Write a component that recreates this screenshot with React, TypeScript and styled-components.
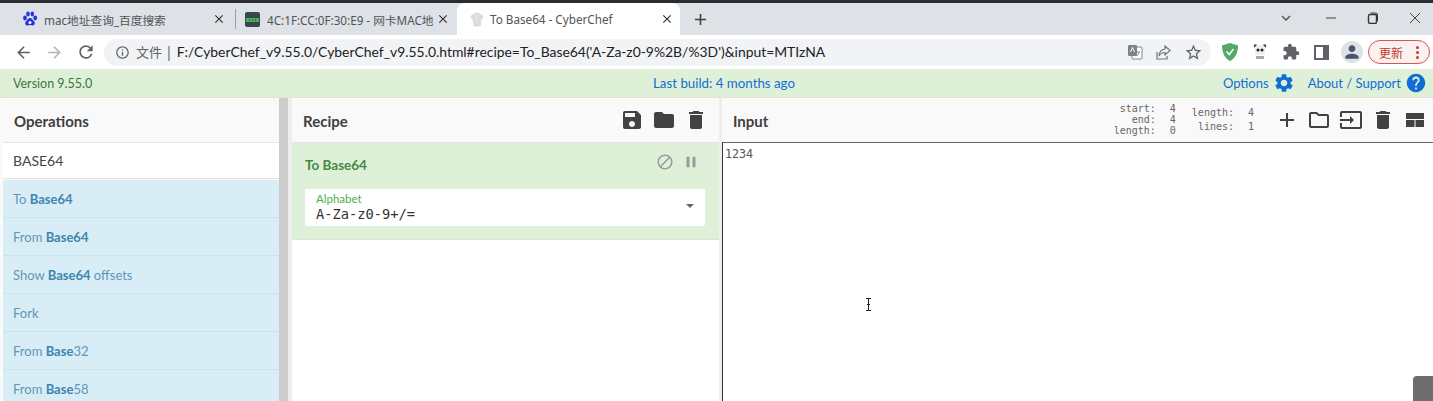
import * as React from "react";
import styled, { createGlobalStyle } from "styled-components";
import {
  MdAdd,
  MdArrowBack,
  MdArrowForward,
  MdBlock,
  MdClose,
  MdDelete,
  MdExtension,
  MdFolder,
  MdHelp,
  MdInput,
  MdInfoOutline,
  MdKeyboardArrowDown,
  MdOutlineFolder,
  MdPause,
  MdPerson,
  MdRefresh,
  MdSave,
  MdSettings,
  MdStarBorder,
} from "react-icons/md";

const GlobalStyle = createGlobalStyle`
  html, body {
    margin: 0;
    padding: 0;
    height: 100%;
    overflow: hidden;
    background: #fff;
  }
  body {
    font-family: Lato, "Noto Sans CJK SC", sans-serif;
  }
`;

const operations: { pre?: string; bold?: string; post?: string }[] = [
  { pre: "To ", bold: "Base64" },
  { pre: "From ", bold: "Base64" },
  { pre: "Show ", bold: "Base64", post: " offsets" },
  { pre: "Fork" },
  { pre: "From ", bold: "Base", post: "32" },
  { pre: "From ", bold: "Base", post: "58" },
];

const App: React.FunctionComponent = () => {
  return (
    <Page>
      <GlobalStyle />
      <TitleEdge />
      <TabStrip>
        <FirstTab>
          <BaiduIcon />
          <TabTitle>mac地址查询_百度搜索</TabTitle>
          <TabClose />
        </FirstTab>
        <TabDivider />
        <SecondTab>
          <ChipIcon />
          <TabTitle>4C:1F:CC:0F:30:E9 - 网卡MAC地</TabTitle>
          <TabClose />
        </SecondTab>
        <ActiveTab>
          <ChefIcon />
          <TabTitle>To Base64 - CyberChef</TabTitle>
          <TabClose />
        </ActiveTab>
        <NewTab />
        <WindowControls>
          <MdKeyboardArrowDown size={18} color="#555" />
          <WindowGlyph>
            <svg width="12" height="12" viewBox="0 0 12 12">
              <path d="M1 6h10" stroke="#444" strokeWidth="1" />
            </svg>
          </WindowGlyph>
          <WindowGlyph>
            <svg width="12" height="12" viewBox="0 0 12 12" fill="none" stroke="#333">
              <rect x="1.5" y="2.5" width="8" height="9" rx="1.5" strokeWidth="1.4" />
              <path d="M3.5 1h5a2 2 0 0 1 2 2v6" />
            </svg>
          </WindowGlyph>
          <WindowGlyph>
            <svg width="12" height="12" viewBox="0 0 12 12">
              <path d="M1 1l10 10M11 1L1 11" stroke="#444" strokeWidth="1" />
            </svg>
          </WindowGlyph>
        </WindowControls>
      </TabStrip>

      <Toolbar>
        <NavButtons>
          <MdArrowBack size={19} color="#5f6368" />
          <MdArrowForward size={19} color="#b4b7bb" />
          <MdRefresh size={20} color="#5f6368" />
        </NavButtons>
        <AddressBar>
          <MdInfoOutline size={15} color="#5f6368" />
          <FileLabel>文件</FileLabel>
          <FileBar>|</FileBar>
          <UrlText>F:/CyberChef_v9.55.0/CyberChef_v9.55.0.html#recipe=To_Base64('A-Za-z0-9%2B/%3D')&amp;input=MTIzNA</UrlText>
          <AddressIcons>
            <TranslateIcon />
            <ShareIcon />
            <MdStarBorder size={19} color="#5f6368" />
          </AddressIcons>
        </AddressBar>
        <ExtensionIcons>
          <ShieldIcon />
          <PandaIcon />
          <MdExtension size={18} color="#5f6368" />
          <SidePanelIcon />
          <Avatar>
            <MdPerson size={20} color="#4a5568" />
          </Avatar>
        </ExtensionIcons>
        <UpdateButton>
          更新
          <UpdateDots>
            <span />
            <span />
            <span />
          </UpdateDots>
        </UpdateButton>
      </Toolbar>

      <Banner>
        <VersionText>Version 9.55.0</VersionText>
        <BuildText>Last build: 4 months ago</BuildText>
        <BannerLinks>
          <BannerLink>
            Options <MdSettings size={22} />
          </BannerLink>
          <BannerLink>
            About / Support <MdHelp size={22} />
          </BannerLink>
        </BannerLinks>
      </Banner>

      <Workspace>
        <OperationsColumn>
          <PanelHeader>Operations</PanelHeader>
          <SearchBox>BASE64</SearchBox>
          <OperationList>
            {operations.map((op, i) => (
              <OperationItem key={i}>
                {op.pre}
                {op.bold && <b>{op.bold}</b>}
                {op.post}
              </OperationItem>
            ))}
          </OperationList>
        </OperationsColumn>
        <WideGutter />
        <RecipeColumn>
          <PanelHeader>
            Recipe
            <HeaderIcons>
              <MdSave size={24} />
              <MdFolder size={24} />
              <MdDelete size={24} />
            </HeaderIcons>
          </PanelHeader>
          <RecipeCard>
            <CardTop>
              To Base64
              <CardIcons>
                <MdBlock size={18} />
                <MdPause size={18} />
              </CardIcons>
            </CardTop>
            <AlphabetField>
              <FieldLabel>Alphabet</FieldLabel>
              <FieldValue>A-Za-z0-9+/=</FieldValue>
              <FieldCaret />
            </AlphabetField>
          </RecipeCard>
        </RecipeColumn>
        <NarrowGutter />
        <InputColumn>
          <InputHeader>
            Input
            <InputMeta>
              <InfoGroup $lineHeight={11} $gap={16}>
                <InfoRow>start:<i>4</i></InfoRow>
                <InfoRow>end:<i>4</i></InfoRow>
                <InfoRow>length:<i>0</i></InfoRow>
              </InfoGroup>
              <InfoGroup $lineHeight={14} $gap={21}>
                <InfoRow>length:<i>4</i></InfoRow>
                <InfoRow>lines:<i>1</i></InfoRow>
              </InfoGroup>
              <InputIcons>
                <MdAdd size={24} />
                <MdOutlineFolder size={24} />
                <MdInput size={24} />
                <MdDelete size={24} />
                <LayoutIcon />
              </InputIcons>
            </InputMeta>
          </InputHeader>
          <InputArea>1234</InputArea>
        </InputColumn>
      </Workspace>

      <TextCursor>
        <svg width="7" height="13" viewBox="0 0 7 13" fill="none" stroke="#222">
          <path d="M1 .5h5M3.5 .5v12M1 12.5h5M2 6.5h3" />
        </svg>
      </TextCursor>
      <CornerTab />
    </Page>
  );
};

export default App;

function BaiduIcon() {
  return (
    <svg width="16" height="16" viewBox="0 0 16 16" fill="#2932e1">
      <ellipse cx="3" cy="7" rx="1.9" ry="2.4" />
      <ellipse cx="6" cy="3" rx="1.8" ry="2.4" />
      <ellipse cx="10.3" cy="3" rx="1.8" ry="2.4" />
      <ellipse cx="13.2" cy="7" rx="1.9" ry="2.4" />
      <path d="M8 7c2 0 2.600 2 4 3.200 1.600 1.500.8 4.300-1.500 4.300-1 0-1.700-.4-2.500-.4s-1.500.4-2.500.4C3.200 14.500 2.400 11.700 4 10.200 5.400 9 6 7 8 7z" />
      <circle cx="8" cy="11.500" r="1.500" fill="#fff" />
    </svg>
  );
}

function ChipIcon() {
  return (
    <svg width="15" height="15" viewBox="0 0 15 15">
      <rect width="15" height="15" rx="2" fill="#37474f" />
      <rect x="1" y="6" width="13" height="4" fill="#4caf50" />
      <path d="M4 8h1M7 8h1M10 8h1" stroke="#1b2a20" />
    </svg>
  );
}

function ChefIcon() {
  return (
    <svg width="16" height="17" viewBox="0 0 16 17">
      <path d="M4 9C1 8 1 3.500 4 3.500 5 1 11 1 12 3.500c3 0 3 4.500 0 5.500v5.500C10 16 6 16 4 14.500z" fill="#dcdcdc" />
      <path d="M7.500 4v6" stroke="#f1f1f1" />
    </svg>
  );
}

function TranslateIcon() {
  return (
    <svg width="16" height="16" viewBox="0 0 16 16">
      <rect x="5" y="3" width="10" height="12" rx="1" fill="#fff" stroke="#80868b" />
      <rect x="1" y="1" width="9" height="11" rx="1" fill="#7d8286" />
      <path d="M3.500 8l2-4.500L7.500 8" fill="none" stroke="#fff" />
      <path d="M10 8h3M12 8c0 2-1 3-2 4" fill="none" stroke="#80868b" />
    </svg>
  );
}

function ShareIcon() {
  return (
    <svg width="17" height="17" viewBox="0 0 17 17" fill="none" stroke="#70757a" strokeWidth="1.200">
      <path d="M2 8v7h10v-3" />
      <path d="M10 2l5 4.500-5 4.500V8.500C7 8.500 5.500 9.500 4 12c.3-4 2.500-6.500 6-7z" />
    </svg>
  );
}

function ShieldIcon() {
  return (
    <svg width="16" height="18" viewBox="0 0 16 18">
      <path d="M8 0l8 2.500C16 10 13 15.500 8 18 3 15.500 0 10 0 2.500z" fill="#52a968" />
      <path d="M4.500 8.500L7.300 11.500 11.500 6" fill="none" stroke="#fff" strokeWidth="1.500" />
    </svg>
  );
}

function PandaIcon() {
  return (
    <svg width="16" height="18" viewBox="0 0 16 18">
      <circle cx="3.500" cy="3" r="1.700" fill="#333" />
      <circle cx="12.500" cy="3" r="1.700" fill="#333" />
      <rect x="3" y="2" width="10" height="10" rx="3" fill="#eee" />
      <circle cx="6" cy="7" r="1.500" fill="#222" />
      <circle cx="10" cy="7" r="1.500" fill="#222" />
      <rect x="4" y="13" width="8" height="3" fill="#aaa" />
    </svg>
  );
}

function SidePanelIcon() {
  return (
    <svg width="15" height="15" viewBox="0 0 15 15">
      <rect x="1" y="1" width="13" height="13" fill="#fff" stroke="#5f6368" strokeWidth="2" />
      <rect x="9" y="1" width="5" height="13" fill="#5f6368" />
    </svg>
  );
}

function LayoutIcon() {
  return (
    <svg width="24" height="24" viewBox="0 0 24 24" fill="currentColor">
      <path d="M3 5h18v6H3zM3 12h8.500v7H3zM12.500 12H21v7h-8.500z" />
    </svg>
  );
}

const Page = styled.div`
  position: relative;
  width: 1433px;
  height: 401px;
  overflow: hidden;
  display: flex;
  flex-direction: column;
  background: #fff;
`;

const TitleEdge = styled.div`
  height: 3px;
  flex: none;
  background: #292c30;
`;

const TabStrip = styled.div`
  height: 32px;
  flex: none;
  display: flex;
  align-items: stretch;
  background: #dee1e6;
  padding-left: 13px;
`;

const Tab = styled.div`
  display: flex;
  align-items: center;
  box-sizing: border-box;
  font: 11.700px "Noto Sans", "Noto Sans CJK SC", sans-serif;
  color: #50555a;

  svg {
    flex: none;
  }
`;

const FirstTab = styled(Tab)`
  width: 222px;
  padding: 0 9px;
  gap: 6px;
`;

const SecondTab = styled(Tab)`
  width: 221px;
  padding: 0 7px 0 9px;
  gap: 7px;
`;

const ActiveTab = styled(Tab)`
  width: 223px;
  background: #fff;
  border-radius: 8px 8px 0 0;
  padding: 0 6px 0 12px;
  gap: 5px;
`;

const TabTitle = styled.span`
  flex: 1;
  min-width: 0;
  white-space: nowrap;
`;

const TabDivider = styled.div`
  width: 1px;
  height: 20px;
  margin: 6px 0 0;
  background: #9aa0a6;
`;

const TabClose = styled(MdClose).attrs({ size: 14 })`
  color: #333;
`;

const NewTab = styled(MdAdd).attrs({ size: 19 })`
  flex: none;
  align-self: center;
  margin-left: 11px;
  color: #3c4043;
`;

const WindowControls = styled.div`
  margin-left: auto;
  display: flex;
  align-items: center;
  gap: 30px;
  padding: 0 12px 2px 0;
`;

const WindowGlyph = styled.span`
  display: flex;
`;

const Toolbar = styled.div`
  height: 34px;
  flex: none;
  display: flex;
  align-items: center;
  background: #fff;
  padding-left: 14px;
  box-sizing: border-box;
`;

const NavButtons = styled.div`
  display: flex;
  align-items: center;
  gap: 12px;
  width: 92px;
`;

const AddressBar = styled.div`
  width: 1107px;
  height: 27px;
  margin-left: -2px;
  padding-left: 11px;
  box-sizing: border-box;
  background: #f1f3f4;
  border-radius: 14px;
  display: flex;
  align-items: center;
`;

const FileLabel = styled.span`
  margin: -1px 0 0 6px;
  font: 13px "Noto Sans CJK SC", sans-serif;
  color: #5f6368;
`;

const FileBar = styled.span`
  margin: -1px 4px 0 3px;
  font: 14px "Noto Sans", sans-serif;
  color: #5f6368;
`;

const UrlText = styled.span`
  margin-top: -1px;
  font: 13.900px Lato, sans-serif;
  color: #202124;
  white-space: nowrap;
`;

const AddressIcons = styled.div`
  margin-left: auto;
  display: flex;
  align-items: center;
  gap: 12px;
  padding-right: 8px;
`;

const ExtensionIcons = styled.div`
  display: flex;
  align-items: center;
  gap: 14px;
  margin-left: 11px;
`;

const Avatar = styled.div`
  width: 22px;
  height: 22px;
  margin-left: -2px;
  border-radius: 50%;
  background: #dee1e6;
  display: flex;
  align-items: center;
  justify-content: center;
`;

const UpdateButton = styled.div`
  width: 62px;
  height: 24px;
  margin-left: 5px;
  box-sizing: border-box;
  border: 1px solid #d9534f;
  border-radius: 12px;
  background: #fbf1f0;
  color: #c5392f;
  font: 12px "Noto Sans CJK SC", sans-serif;
  display: flex;
  align-items: center;
  padding-left: 10px;
`;

const UpdateDots = styled.div`
  margin-left: 13px;
  display: flex;
  flex-direction: column;
  gap: 2px;

  span {
    width: 3px;
    height: 3px;
    border-radius: 50%;
    background: #c5392f;
  }
`;

const Banner = styled.div`
  height: 28px;
  flex: none;
  background: #dff0d8;
  border-bottom: 1px solid #d8e6d3;
  display: grid;
  grid-template-columns: 1fr 1fr 1fr;
  align-items: center;
  padding: 0 6px 0 13px;
  font-size: 13px;
`;

const VersionText = styled.span`
  color: #3c763d;
  font-size: 12.500px;
`;

const BuildText = styled.span`
  color: #0f6ed5;
  text-align: center;
  padding-left: 8px;
  font-size: 13.300px;
`;

const BannerLinks = styled.div`
  display: flex;
  justify-content: flex-end;
  gap: 13px;
`;

const BannerLink = styled.span`
  display: flex;
  align-items: center;
  gap: 4px;
  color: #0f6ed5;
`;

const Workspace = styled.div`
  flex: 1;
  min-height: 0;
  display: flex;
  padding-left: 3px;
  background: #fafafa;
`;

const OperationsColumn = styled.div`
  width: 276px;
  flex: none;
  display: flex;
  flex-direction: column;
`;

const WideGutter = styled.div`
  width: 13px;
  flex: none;
  box-sizing: border-box;
  border-left: 9px solid #cccccc;
  background: #eeeeee;
`;

const NarrowGutter = styled.div`
  width: 3px;
  flex: none;
  background: #eeeeee;
`;

const RecipeColumn = styled.div`
  width: 427px;
  flex: none;
  display: flex;
  flex-direction: column;
  background: #fff;
`;

const InputColumn = styled.div`
  flex: 1;
  min-width: 0;
  display: flex;
  flex-direction: column;
`;

const PanelHeader = styled.div`
  height: 45px;
  flex: none;
  box-sizing: border-box;
  display: flex;
  align-items: center;
  justify-content: space-between;
  padding: 1px 10px 0 11px;
  background: #f9f9f9;
  border-bottom: 1px solid #e4e4e4;
  color: #3f3f3f;
  font-size: 15px;
  font-weight: 700;
`;

const HeaderIcons = styled.div`
  display: flex;
  gap: 8px;
  color: #424242;
  margin: -1px 1px 0 0;
`;

const SearchBox = styled.div`
  height: 36px;
  flex: none;
  box-sizing: border-box;
  padding: 0 10px;
  display: flex;
  align-items: center;
  background: #fff;
  color: #444;
  font-size: 14px;
  border-bottom: 1px solid #e4e4e4;
`;

const OperationList = styled.div`
  margin-top: 1px;
  flex: 1;
  background: #d9edf7;
`;

const OperationItem = styled.div`
  height: 38px;
  box-sizing: border-box;
  padding: 0 10px;
  display: flex;
  align-items: center;
  white-space: pre;
  border-bottom: 1px solid #c6e5ef;
  color: #5e97b6;
  font-size: 13px;

  b {
    color: #3d85ad;
  }
`;

const RecipeCard = styled.div`
  height: 97px;
  flex: none;
  box-sizing: border-box;
  padding: 0 14px 0 13px;
  background: #dff0d8;
  border-bottom: 1px solid #d8e6d3;
`;

const CardTop = styled.div`
  height: 46px;
  box-sizing: border-box;
  display: flex;
  align-items: center;
  justify-content: space-between;
  padding: 0 5px 2px 0;
  color: #468847;
  font-size: 13.500px;
  font-weight: 700;
`;

const CardIcons = styled.div`
  display: flex;
  gap: 8px;
  color: #9a9a9a;
  margin-top: -6px;
`;

const AlphabetField = styled.div`
  position: relative;
  height: 37px;
  box-sizing: border-box;
  background: #fff;
  border-radius: 2px;
  padding: 3px 11px;
`;

const FieldLabel = styled.div`
  font-size: 11.500px;
  line-height: 13px;
  color: #4caf50;
`;

const FieldValue = styled.div`
  margin-top: 1px;
  font: 13.700px/17px "DejaVu Sans Mono", monospace;
  color: #333;
`;

const FieldCaret = styled.span`
  position: absolute;
  right: 11px;
  top: 15px;
  border-left: 4px solid transparent;
  border-right: 4px solid transparent;
  border-top: 4px solid #666;
`;

const InputHeader = styled(PanelHeader)`
  padding: 1px 0 0 11px;
`;

const InputMeta = styled.div`
  display: flex;
  align-items: center;
  color: #555;
  margin-top: -1px;
`;

const InfoGroup = styled.div<{ $lineHeight: number; $gap: number }>`
  margin: -1px ${({ $gap }) => $gap}px 0 0;
  font: 400 10px/${({ $lineHeight }) => $lineHeight}px "DejaVu Sans Mono", monospace;
  color: #666;
  white-space: pre;
`;

const InfoRow = styled.div`
  text-align: right;

  i {
    font-style: normal;
    display: inline-block;
    width: 20px;
    text-align: right;
  }
`;

const InputIcons = styled.div`
  display: flex;
  gap: 8px;
  padding-right: 6px;
  color: #424242;
`;

const InputArea = styled.div`
  flex: 1;
  background: #fff;
  border-left: 1px solid #333;
  border-top: 1px solid #666;
  margin-top: -1px;
  padding: 4px 2px;
  font: 11.700px/15px "DejaVu Sans Mono", monospace;
  color: #555;
`;

const TextCursor = styled.div`
  position: absolute;
  left: 865px;
  top: 298px;
  display: flex;
`;

const CornerTab = styled.div`
  position: absolute;
  right: 0;
  bottom: 0;
  width: 20px;
  height: 25px;
  background: #6e6e6e;
  border-top-left-radius: 4px;
`;
